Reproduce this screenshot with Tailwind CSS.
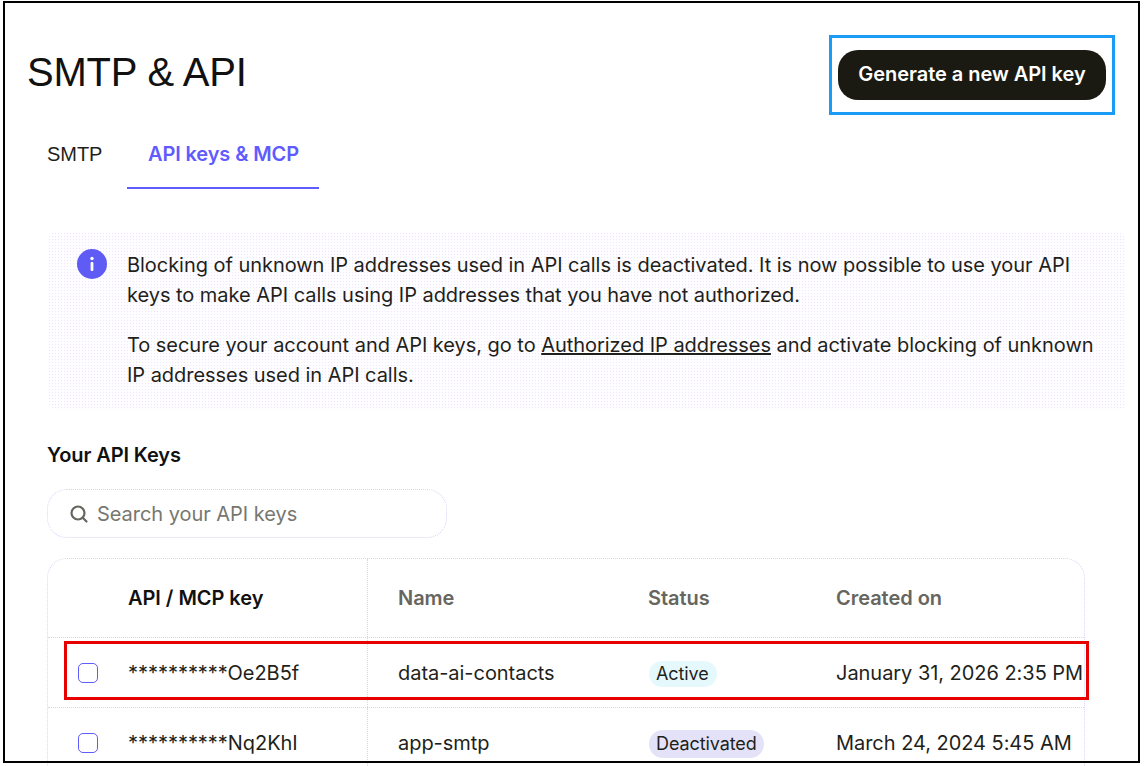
<!DOCTYPE html>
<html lang="en">
<head>
<meta charset="utf-8">
<script src="https://cdn.jsdelivr.net/npm/@tailwindcss/browser@4"></script>
<title>SMTP & API</title>
</head>
<body class="bg-white">
<div class="relative w-[1144px] h-[766px] overflow-hidden font-['Inter',sans-serif] text-[#1f1f1b] text-[20px] tracking-[-0.04px]">
  <main class="pl-[48px] pr-[58px] pt-[35px]">
    <header class="flex items-start justify-between -ml-[21px] -mr-[29px]">
      <h1 class="font-['Liberation_Sans',sans-serif] text-[40px] leading-[74px] font-normal text-[#111] tracking-[-0.2px]">SMTP &amp; API</h1>
      <div class="w-[286px] h-[80px] border-[3px] border-[#1a9bf5] flex items-center justify-center">
        <button class="w-[268px] h-[50px] pb-[2px] rounded-[20px] bg-[#1a1a12] text-white text-[20px] font-semibold">Generate a new API key</button>
      </div>
    </header>
    <nav class="flex items-start mt-[14px] leading-[28px]">
      <span class="w-[80px] -ml-[1px] pt-[11px] text-[#1f1f1b] font-['Liberation_Sans',sans-serif]">SMTP</span>
      <span class="pt-[11px] pb-[19px] pl-[21px] pr-[20px] font-semibold text-[#5f5bff] border-b-2 border-[#5f5bff] tracking-[-0.12px]">API keys &amp; MCP</span>
    </nav>
    <section class="mt-[43px] h-[178px] -mr-[40px] flex gap-[20px] pl-[29px] pt-[18px] rounded-[8px] bg-[radial-gradient(circle,#efe6fd_1px,#fefdff_1px)] bg-[length:3px_3px]">
      <svg class="-mt-[1px] shrink-0" width="30" height="30" viewBox="0 0 30 30"><circle cx="15" cy="15" r="15" fill="#5f5bf5"/><rect x="13.6" y="13" width="2.8" height="9" rx="1" fill="#fff"/><circle cx="15" cy="9.5" r="1.7" fill="#fff"/></svg>
      <div class="leading-[30px] whitespace-nowrap">
        <p>Blocking of unknown IP addresses used in API calls is deactivated. It is now possible to use your API<br>keys to make API calls using IP addresses that you have not authorized.</p>
        <p class="mt-[20px]">To secure your account and API keys, go to <a class="underline">Authorized IP addresses</a> and activate blocking of unknown<br>IP addresses used in API calls.</p>
      </div>
    </section>
    <h2 class="mt-[31px] -ml-[1px] leading-[28px] font-semibold text-[#111] tracking-[-0.1px]">Your API Keys</h2>
    <div class="mt-[20px] -ml-[1px] w-[400px] h-[49px] flex items-center gap-[8px] pl-[21px] rounded-[20px] border border-dotted border-[#d5d5f5] text-[#77776f]">
      <svg width="20" height="20" viewBox="0 0 20 20" fill="none" stroke="#66665f" stroke-width="2.2" stroke-linecap="round"><circle cx="9" cy="9" r="6.5"/><path d="M14 14l3.5 3.5"/></svg>
      <span>Search your API keys</span>
    </div>
    <div class="mt-[20px] -ml-[1px] w-[1038px] rounded-t-[20px] border-x border-t border-dotted border-[#d5d5f5]">
      <div class="flex h-[79px] items-center font-semibold border-b border-dotted border-[#d5d5f5]">
        <div class="w-[80px]"></div>
        <div class="w-[240px] self-stretch flex items-center text-[#111] border-r border-dotted border-[#d8d8d8]">API / MCP key</div>
        <div class="w-[280px] pl-[30px] text-[#66665f]">Name</div>
        <div class="w-[188px] text-[#66665f]">Status</div>
        <div class="text-[#66665f]">Created on</div>
      </div>
      <div class="flex h-[70px] items-center border-b border-dotted border-[#d5d5f5]">
        <div class="w-[80px] pl-[30px]"><div class="w-[20px] h-[20px] rounded-[5px] border border-[#5f5bff]"></div></div>
        <div class="w-[240px] self-stretch flex items-center border-r border-dotted border-[#d8d8d8]">**********Oe2B5f</div>
        <div class="w-[280px] pl-[30px]">data-ai-contacts</div>
        <div class="w-[188px]"><span class="inline-block h-[26px] leading-[26px] ml-[1px] pl-[7px] pr-[8px] rounded-full text-[18px] tracking-[-0.1px] bg-[#e5f9fd]">Active</span></div>
        <div class="whitespace-nowrap">January 31, 2026 2:35 PM</div>
      </div>
      <div class="flex h-[70px] items-center">
        <div class="w-[80px] pl-[30px]"><div class="w-[20px] h-[20px] rounded-[5px] border border-[#5f5bff]"></div></div>
        <div class="w-[240px] self-stretch flex items-center border-r border-dotted border-[#d8d8d8]">**********Nq2KhI</div>
        <div class="w-[280px] pl-[30px]">app-smtp</div>
        <div class="w-[188px]"><span class="inline-block h-[28px] leading-[28px] ml-[1px] px-[7px] rounded-full text-[18px] tracking-[-0.1px] bg-[#e4e2f8]">Deactivated</span></div>
        <div class="whitespace-nowrap">March 24, 2024 5:45 AM</div>
      </div>
    </div>
  </main>
  <div class="absolute left-[64px] top-[641px] w-[1025px] h-[59px] border-[3px] border-[#e60000]"></div>
  <div class="absolute left-[3px] top-[1px] w-[1137px] h-[762px] border-2 border-black pointer-events-none"></div>
</div>
</body>
</html>
